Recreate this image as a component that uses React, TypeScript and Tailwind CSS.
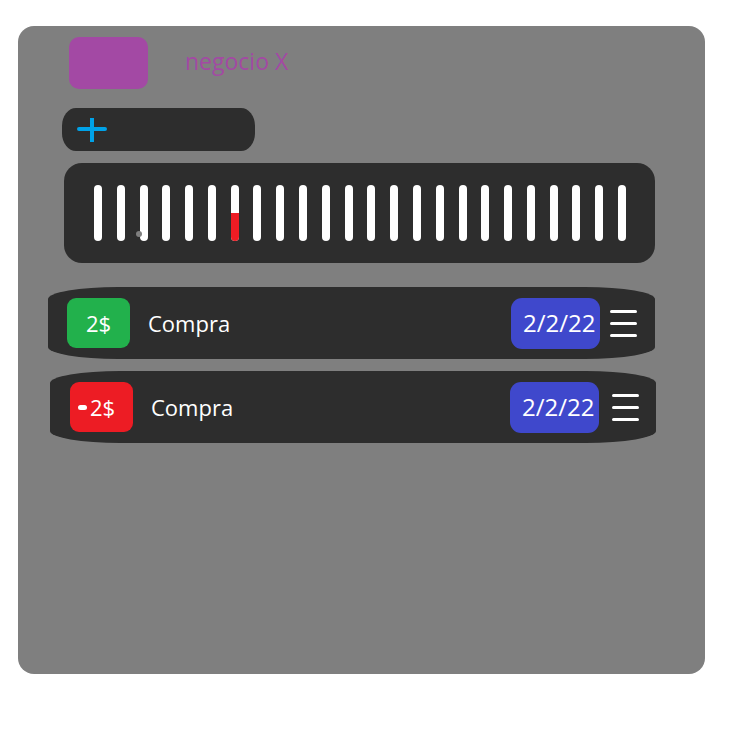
import React from 'react'

const font = { fontFamily: '"Open Sans", "Noto Sans", sans-serif' }

// 24 ticks, the 7th one half filled in red
const ticks = Array.from({ length: 24 }, (_, i) => i)

const Hamburger: React.FC = () => (
  <div className="flex flex-col gap-[9px]">
    <span className="block w-[27px] h-[3px] rounded-full bg-white" />
    <span className="block w-[27px] h-[3px] rounded-full bg-white" />
    <span className="block w-[27px] h-[3px] rounded-full bg-white" />
  </div>
)

export default function App() {
  return (
    <div className="w-[744px] h-[744px] bg-white pt-[26px] pl-[18px]" style={font}>
      <div className="w-[687px] h-[648px] rounded-[16px] bg-[#7f7f7f] flex flex-col">
        {/* Header */}
        <div className="flex items-center mt-[11px] ml-[51px]">
          <div className="w-[79px] h-[52px] rounded-[10px] bg-[#a349a4]" />
          <span className="ml-[37px] text-[23px] leading-none text-[#a349a4] -mt-[4px]">negocio X</span>
        </div>

        {/* Add bar */}
        <div className="mt-[19px] ml-[44px] w-[193px] h-[43px] rounded-[14px/18px] bg-[#2d2d2d] flex items-center pl-[15px]">
          <svg width="30" height="24" viewBox="0 0 30 24">
            <path d="M2 11h26M15 0v24" stroke="#00a2e8" strokeWidth="4" strokeLinecap="round" />
          </svg>
        </div>

        {/* Slider */}
        <div className="relative mt-[12px] ml-[46px] w-[591px] h-[100px] rounded-[18px] bg-[#2d2d2d] flex items-center justify-between pl-[30px] pr-[29px]">
          {ticks.map((i) => (
            <div key={i} className="relative w-[8px] h-[56px] rounded-full bg-white overflow-hidden">
              {i === 6 && <div className="absolute bottom-0 left-0 w-full h-[28px] bg-[#ed1c24]" />}
            </div>
          ))}
          <span className="absolute left-[72px] top-[68px] w-[6px] h-[6px] rounded-full bg-[#7f7f7f]" />
        </div>

        {/* Row 1 */}
        <div className="mt-[24px] ml-[30px] w-[607px] h-[72px] rounded-[70px/12px] bg-[#2d2d2d] flex items-center pl-[19px] pr-[18px]">
          <div className="w-[63px] h-[50px] rounded-[9px] bg-[#22b14c] flex items-center justify-center text-white text-[22px]">
            2$
          </div>
          <span className="ml-[18px] text-white text-[22px]">Compra</span>
          <div className="ml-auto w-[89px] h-[51px] rounded-[11px] bg-[#3f48cc] flex items-center pl-[12px] text-white text-[24px]">
            2/2/22
          </div>
          <div className="ml-[10px]">
            <Hamburger />
          </div>
        </div>

        {/* Row 2 */}
        <div className="mt-[12px] ml-[32px] w-[606px] h-[72px] rounded-[70px/12px] bg-[#2d2d2d] flex items-center pl-[20px] pr-[17px]">
          <div className="w-[63px] h-[50px] rounded-[9px] bg-[#ed1c24] flex items-center pl-[8px] text-white text-[22px]">
            <span className="block w-[9px] h-[5px] rounded-full bg-white mr-[3px]" />
            2$
          </div>
          <span className="ml-[18px] text-white text-[22px]">Compra</span>
          <div className="ml-auto w-[89px] h-[51px] rounded-[11px] bg-[#3f48cc] flex items-center pl-[12px] text-white text-[24px]">
            2/2/22
          </div>
          <div className="ml-[13px]">
            <Hamburger />
          </div>
        </div>
      </div>
    </div>
  )
}
